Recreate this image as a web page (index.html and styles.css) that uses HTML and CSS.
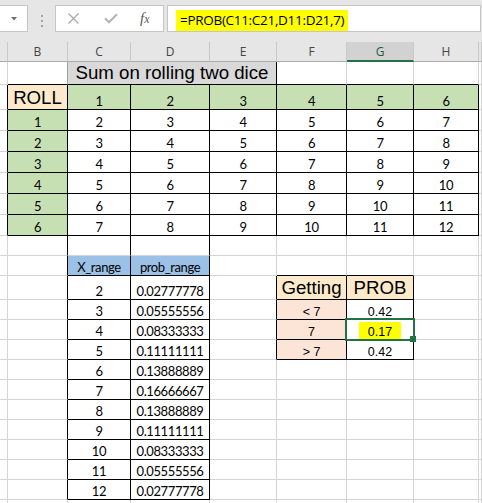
FILE: index.html
```html
<!DOCTYPE html>
<html>
<head>
<meta charset="utf-8">
<link rel="stylesheet" href="styles.css">
</head>
<body>
<div class="toolbar">
  <div class="namebox">
    <svg class="ddarrow" width="6" height="4" viewBox="0 0 6 4"><path d="M0 0H6L3 3.5Z" fill="#6f6f6f"/></svg>
  </div>
  <div class="grip"><i></i><i></i><i></i></div>
  <div class="btnbox">
    <svg class="ic-x" width="11" height="11" viewBox="0 0 11 11"><path d="M0.5 0.5L10.5 10.5M10.5 0.5L0.5 10.5" stroke="#a9a9a9" stroke-width="1.3" fill="none"/></svg>
    <svg class="ic-ok" width="14" height="11" viewBox="0 0 14 11"><path d="M1 5.2L5 9.2L13 1.2" fill="none" stroke="#b4b4b4" stroke-width="2.2"/></svg>
    <span class="fx">f<span class="fx-x">x</span></span>
  </div>
  <div class="formula"><span class="hl">=PROB(C11:C21,D11:D21,7)</span></div>
</div>

<div class="sheet">
  <div class="row h20">
    <div class="hd"></div><div class="hd">B</div><div class="hd">C</div><div class="hd">D</div><div class="hd">E</div><div class="hd">F</div><div class="hd sel">G</div><div class="hd">H</div><div class="hd"></div>
  </div>

  <div class="row h23">
    <div class="c"></div>
    <div class="c bm bb"></div>
    <div class="c br bb gry big sum">Sum on rolling two dice</div>
    <div class="c bb"></div><div class="c bb"></div><div class="c bb"></div><div class="c"></div>
  </div>

  <div class="row h25">
    <div class="c br"></div>
    <div class="c br bb peach big">ROLL</div>
    <div class="c br bb grn">1</div><div class="c br bb grn">2</div><div class="c br bb grn">3</div><div class="c br bb grn">4</div><div class="c br bb grn">5</div><div class="c br bb grn">6</div>
    <div class="c"></div>
  </div>

  <div class="row h21">
    <div class="c br"></div><div class="c br bb grn">1</div>
    <div class="c br bb">2</div><div class="c br bb">3</div><div class="c br bb">4</div><div class="c br bb">5</div><div class="c br bb">6</div><div class="c br bb">7</div>
    <div class="c"></div>
  </div>
  <div class="row h21">
    <div class="c br"></div><div class="c br bb grn">2</div>
    <div class="c br bb">3</div><div class="c br bb">4</div><div class="c br bb">5</div><div class="c br bb">6</div><div class="c br bb">7</div><div class="c br bb">8</div>
    <div class="c"></div>
  </div>
  <div class="row h21">
    <div class="c br"></div><div class="c br bb grn">3</div>
    <div class="c br bb">4</div><div class="c br bb">5</div><div class="c br bb">6</div><div class="c br bb">7</div><div class="c br bb">8</div><div class="c br bb">9</div>
    <div class="c"></div>
  </div>
  <div class="row h21">
    <div class="c br"></div><div class="c br bb grn">4</div>
    <div class="c br bb">5</div><div class="c br bb">6</div><div class="c br bb">7</div><div class="c br bb">8</div><div class="c br bb">9</div><div class="c br bb">10</div>
    <div class="c"></div>
  </div>
  <div class="row h21">
    <div class="c br"></div><div class="c br bb grn">5</div>
    <div class="c br bb">6</div><div class="c br bb">7</div><div class="c br bb">8</div><div class="c br bb">9</div><div class="c br bb">10</div><div class="c br bb">11</div>
    <div class="c"></div>
  </div>
  <div class="row h21">
    <div class="c br"></div><div class="c br bb grn">6</div>
    <div class="c br bb">7</div><div class="c br bb">8</div><div class="c br bb">9</div><div class="c br bb">10</div><div class="c br bb">11</div><div class="c br bb">12</div>
    <div class="c"></div>
  </div>

  <div class="row h20">
    <div class="c"></div><div class="c br"></div><div class="c br"></div><div class="c br"></div>
    <div class="c"></div><div class="c"></div><div class="c"></div><div class="c"></div><div class="c"></div>
  </div>

  <div class="row h20">
    <div class="c"></div><div class="c br"></div>
    <div class="c br bb blu">X_range</div><div class="c br bb blu">prob_range</div>
    <div class="c"></div><div class="c bb"></div><div class="c bb"></div><div class="c"></div><div class="c"></div>
  </div>

  <div class="row h24">
    <div class="c"></div><div class="c br"></div>
    <div class="c br bb">2</div><div class="c br bb">0.02777778</div>
    <div class="c br"></div>
    <div class="c br bb peach big">Getting</div><div class="c br bb peach big">PROB</div>
    <div class="c"></div><div class="c"></div>
  </div>
  <div class="row h20">
    <div class="c"></div><div class="c br"></div>
    <div class="c br bb">3</div><div class="c br bb">0.05555556</div>
    <div class="c br"></div>
    <div class="c br bb pnk ar">&lt; 7</div><div class="c br bb ar">0.42</div>
    <div class="c"></div><div class="c"></div>
  </div>
  <div class="row h20">
    <div class="c"></div><div class="c br"></div>
    <div class="c br bb">4</div><div class="c br bb">0.08333333</div>
    <div class="c br"></div>
    <div class="c br bb pnk ar">7</div><div class="c br bb ar selc"><span class="hlc">0.17</span></div>
    <div class="c"></div><div class="c"></div>
  </div>
  <div class="row h20">
    <div class="c"></div><div class="c br"></div>
    <div class="c br bb">5</div><div class="c br bb">0.11111111</div>
    <div class="c br"></div>
    <div class="c br bb pnk ar">&gt; 7</div><div class="c br bb ar">0.42</div>
    <div class="c"></div><div class="c"></div>
  </div>
  <div class="row h20">
    <div class="c"></div><div class="c br"></div>
    <div class="c br bb">6</div><div class="c br bb">0.13888889</div>
    <div class="c"></div><div class="c"></div><div class="c"></div><div class="c"></div><div class="c"></div>
  </div>
  <div class="row h20">
    <div class="c"></div><div class="c br"></div>
    <div class="c br bb">7</div><div class="c br bb">0.16666667</div>
    <div class="c"></div><div class="c"></div><div class="c"></div><div class="c"></div><div class="c"></div>
  </div>
  <div class="row h20">
    <div class="c"></div><div class="c br"></div>
    <div class="c br bb">8</div><div class="c br bb">0.13888889</div>
    <div class="c"></div><div class="c"></div><div class="c"></div><div class="c"></div><div class="c"></div>
  </div>
  <div class="row h20">
    <div class="c"></div><div class="c br"></div>
    <div class="c br bb">9</div><div class="c br bb">0.11111111</div>
    <div class="c"></div><div class="c"></div><div class="c"></div><div class="c"></div><div class="c"></div>
  </div>
  <div class="row h20">
    <div class="c"></div><div class="c br"></div>
    <div class="c br bb">10</div><div class="c br bb">0.08333333</div>
    <div class="c"></div><div class="c"></div><div class="c"></div><div class="c"></div><div class="c"></div>
  </div>
  <div class="row h20">
    <div class="c"></div><div class="c br"></div>
    <div class="c br bb">11</div><div class="c br bb">0.05555556</div>
    <div class="c"></div><div class="c"></div><div class="c"></div><div class="c"></div><div class="c"></div>
  </div>
  <div class="row h20">
    <div class="c"></div><div class="c br"></div>
    <div class="c br bb">12</div><div class="c br bb">0.02777778</div>
    <div class="c"></div><div class="c"></div><div class="c"></div><div class="c"></div><div class="c"></div>
  </div>
  <div class="row h4">
    <div class="c"></div><div class="c"></div><div class="c"></div><div class="c"></div>
    <div class="c"></div><div class="c"></div><div class="c"></div><div class="c"></div><div class="c"></div>
  </div>
</div>
</body>
</html>
```

FILE: styles.css
```css
html, body {
  margin: 0;
  padding: 0;
  background: #ffffff;
}
body {
  width: 482px;
  height: 503px;
  overflow: hidden;
  font-family: "Lato", "Liberation Sans", sans-serif;
}

/* ---------- formula bar ---------- */
.toolbar {
  display: flex;
  align-items: flex-start;
  height: 42px;
  padding-top: 5px;
  box-sizing: border-box;
  background: #e6e6e6;
}
.namebox {
  width: 28px;
  height: 27px;
  box-sizing: border-box;
  background: #ffffff;
  border: 1px solid #c6c6c6;
  border-left: none;
  display: flex;
  align-items: center;
  justify-content: center;
}
.ddarrow {
  display: block;
  margin-left: 1px;
}
.grip {
  width: 27px;
  height: 27px;
  box-sizing: border-box;
  padding-top: 10px;
  display: flex;
  flex-direction: column;
  align-items: center;
  gap: 3px;
}
.grip i {
  display: block;
  width: 2px;
  height: 2px;
  background: #a3a3a3;
}
.btnbox {
  width: 109px;
  height: 27px;
  box-sizing: border-box;
  background: #ffffff;
  border: 1px solid #c6c6c6;
  display: flex;
  align-items: center;
}
.ic-x {
  display: block;
  margin-left: 12px;
}
.ic-ok {
  display: block;
  margin-left: 25px;
}
.fx {
  margin-left: 22px;
  font-family: "Liberation Serif", serif;
  font-style: italic;
  font-size: 15px;
  line-height: 1;
  color: #5a5a5a;
}
.fx-x {
  font-size: 12px;
}
.formula {
  margin-left: 3px;
  width: 314px;
  height: 27px;
  box-sizing: border-box;
  background: #ffffff;
  border: 1px solid #c6c6c6;
  display: flex;
  align-items: flex-end;
  padding-left: 8px;
}
.hl {
  display: inline-block;
  height: 21px;
  line-height: 21px;
  padding: 0 4px;
  background: #ffff00;
  font-family: "Open Sans", sans-serif;
  font-size: 13.5px;
  letter-spacing: -0.3px;
  color: #000;
  white-space: nowrap;
}

/* ---------- sheet grid ---------- */
.row {
  display: grid;
  grid-template-columns: 8px 60px 63px 79px 67px 70px 67px 65px 3px;
}
.h4  { grid-template-rows: 4px; }
.h20 { grid-template-rows: 20px; }
.h21 { grid-template-rows: 21px; }
.h23 { grid-template-rows: 23px; }
.h24 { grid-template-rows: 24px; }
.h25 { grid-template-rows: 25px; }

.hd {
  box-sizing: border-box;
  background: #e6e6e6;
  border-right: 1px solid #c8c8c8;
  border-bottom: 1px solid #ababab;
  display: flex;
  align-items: center;
  justify-content: center;
  font-family: "Open Sans", sans-serif;
  font-size: 12px;
  color: #444444;
}
.hd.sel {
  background: #d2d2d2;
  border-bottom: 2px solid #217346;
  color: #1d5e3a;
}

.c {
  box-sizing: border-box;
  border-right: 1px solid #d4d4d4;
  border-bottom: 1px solid #d4d4d4;
  display: flex;
  align-items: flex-end;
  justify-content: center;
  font-family: "Lato", sans-serif;
  font-size: 13px;
  letter-spacing: -0.4px;
  color: #000000;
  white-space: nowrap;
}
.br { border-right-color: #000000; }
.bb { border-bottom-color: #000000; }
.bm { border-right-color: #9f9f9f; }

.sum { grid-column: span 3; }

.big {
  font-family: "Liberation Sans", sans-serif;
  font-size: 18.67px;
  letter-spacing: 0;
}
.ar {
  font-family: "Liberation Sans", sans-serif;
  font-size: 12.5px;
  letter-spacing: 0;
}

.gry   { background: #d9d9d9; }
.grn   { background: #c6e0b4; }
.peach { background: #fdeacb; }
.blu   { background: #9bc2e6; }
.pnk   { background: #fce4d6; }

/* selected cell */
.selc { position: relative; }
.selc::before {
  content: "";
  position: absolute;
  left: -2px;
  top: -2px;
  right: -2px;
  bottom: -2px;
  border: 2px solid #217346;
}
.selc::after {
  content: "";
  position: absolute;
  right: -3px;
  bottom: -3px;
  width: 6px;
  height: 6px;
  background: #217346;
}
.hlc {
  display: inline-block;
  padding: 3px 9px 0;
  background: #ffff00;
}
```
